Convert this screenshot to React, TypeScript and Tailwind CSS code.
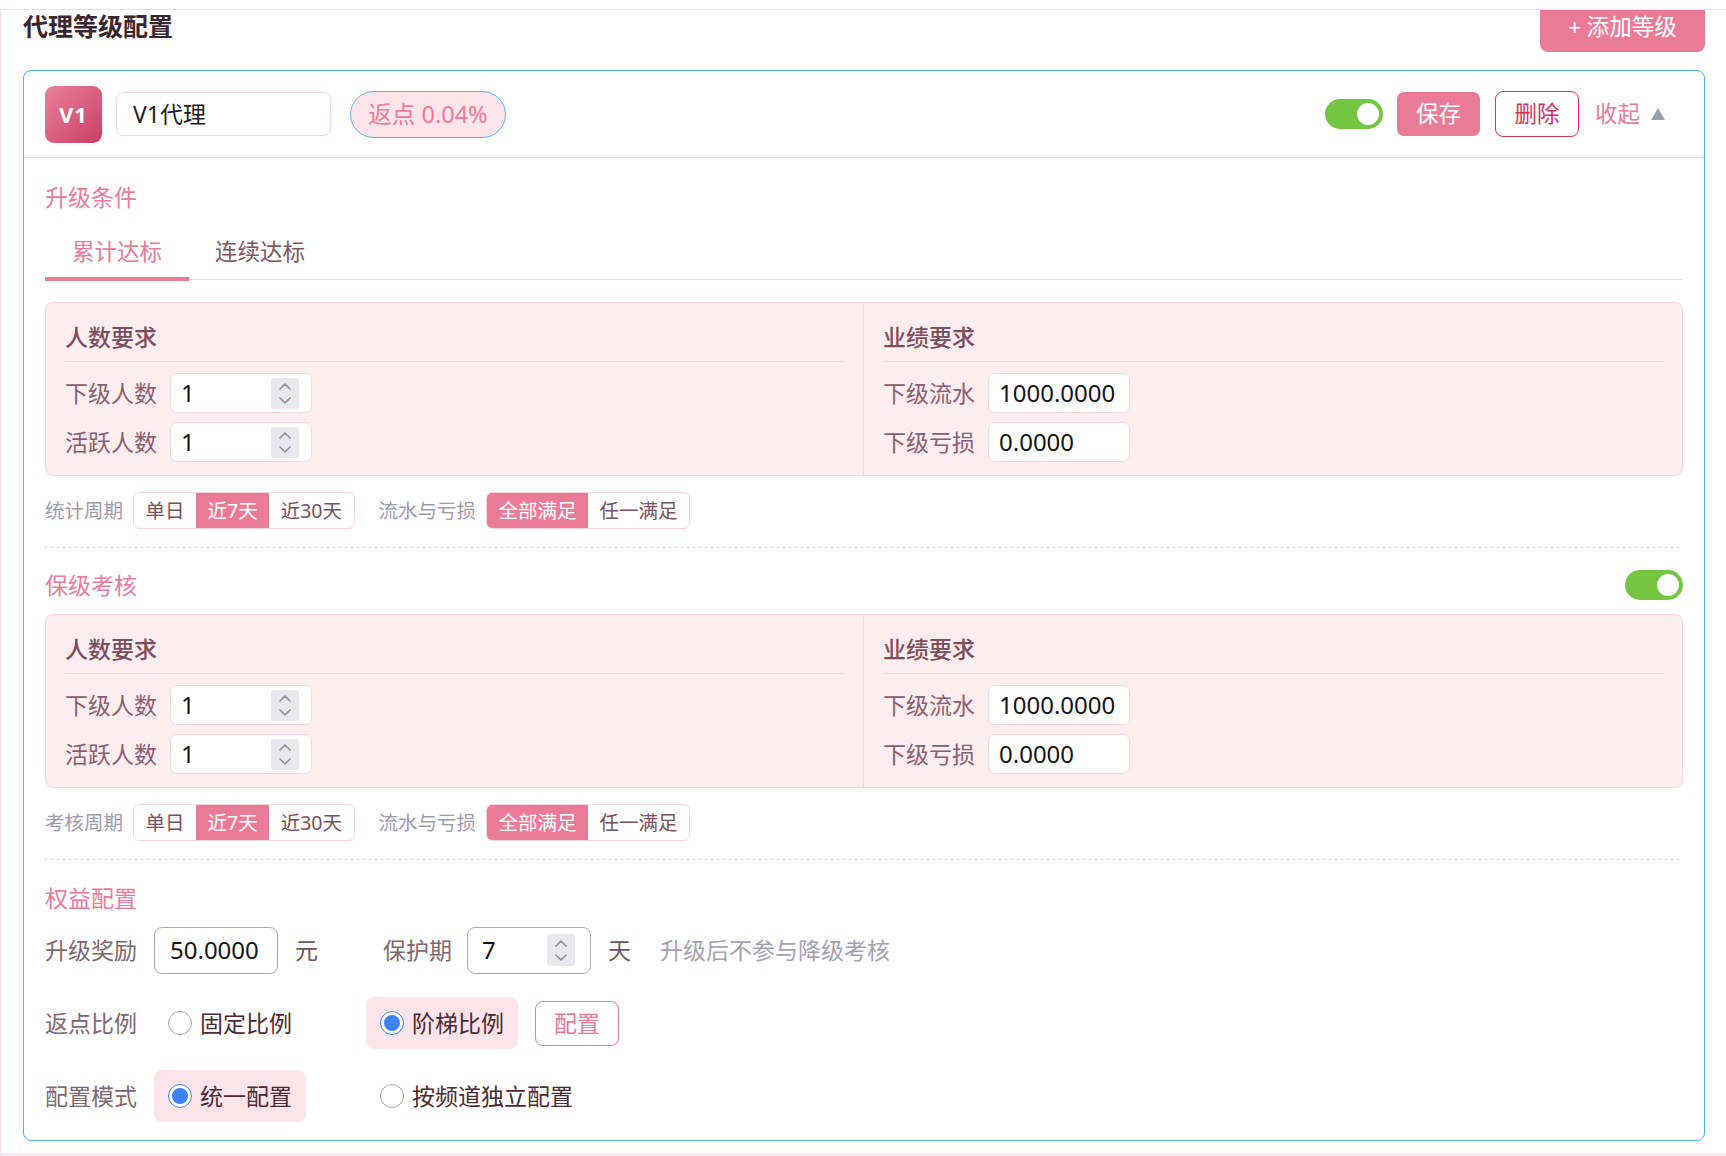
function Toggle() {
  return (
    <div className="flex h-[30px] w-[58px] items-center justify-end rounded-full bg-[#74c642] pr-[4px]">
      <div className="h-[22px] w-[22px] rounded-full bg-white" />
    </div>
  );
}

function Chevron({ up }: { up?: boolean }) {
  return (
    <svg width="12" height="7" viewBox="0 0 12 7" fill="none">
      <path
        d={up ? "M1 6 L6 1 L11 6" : "M1 1 L6 6 L11 1"}
        stroke="#8e8e99"
        strokeWidth="1.6"
        strokeLinecap="round"
        strokeLinejoin="round"
      />
    </svg>
  );
}

function Spinner({ tall }: { tall?: boolean }) {
  return (
    <div
      className={`flex w-[28px] flex-col items-center justify-center gap-[7px] rounded-[3px] bg-[#e8e8ed] ${
        tall ? "h-[32px]" : "h-[31px]"
      }`}
    >
      <Chevron up />
      <Chevron />
    </div>
  );
}

function Field({
  label,
  value,
  spin,
}: {
  label: string;
  value: string;
  spin?: boolean;
}) {
  return (
    <div className="flex h-[40px] items-center">
      <span className="w-[92px] text-[23px] leading-[30px] text-[#8a6070]">
        {label}
      </span>
      <div className="ml-[13px] flex h-[40px] w-[142px] items-center justify-between rounded-[7px] border border-[#f6d6de] bg-white pl-[10px] pr-[12px]">
        <span className="text-[24px] leading-[30px] text-[#141414]">
          {value}
        </span>
        {spin && <Spinner />}
      </div>
    </div>
  );
}

function Column({
  title,
  rows,
  spin,
  divider,
}: {
  title: string;
  rows: [string, string][];
  spin?: boolean;
  divider?: boolean;
}) {
  return (
    <div
      className={`pl-[19px] pr-[18px] pt-[19px] pb-[13px] ${
        divider ? "border-r border-[#f4d6de]" : ""
      }`}
    >
      <div className="border-b border-[#f4d3dc] pb-[9px] text-[23px] font-medium leading-[30px] text-[#7b4e5e]">
        {title}
      </div>
      <div className="mt-[11px] flex flex-col gap-[9px]">
        {rows.map(([l, v]) => (
          <Field key={l} label={l} value={v} spin={spin} />
        ))}
      </div>
    </div>
  );
}

function RequirementPanel() {
  return (
    <div className="grid grid-cols-2 rounded-[8px] border border-[#f6d6de] bg-[#fcedf0]">
      <Column
        title="人数要求"
        spin
        divider
        rows={[
          ["下级人数", "1"],
          ["活跃人数", "1"],
        ]}
      />
      <Column
        title="业绩要求"
        rows={[
          ["下级流水", "1000.0000"],
          ["下级亏损", "0.0000"],
        ]}
      />
    </div>
  );
}

function Segmented({ items, active }: { items: string[]; active: number }) {
  return (
    <div className="flex h-[37px] overflow-hidden rounded-[6px] border border-[#f6d6de] bg-white">
      {items.map((it, i) => (
        <div
          key={it}
          className={`flex items-center px-[11.5px] text-[19.5px] leading-[26px] ${
            i === active ? "bg-[#e97a98] text-white" : "text-[#735262]"
          }`}
        >
          {it}
        </div>
      ))}
    </div>
  );
}

function OptionsRow({ label }: { label: string }) {
  return (
    <div className="mt-[16px] flex items-center">
      <span className="text-[19.5px] leading-[26px] text-[#9d9cab]">{label}</span>
      <div className="ml-[10px]">
        <Segmented items={["单日", "近7天", "近30天"]} active={1} />
      </div>
      <span className="ml-[24px] text-[19.5px] leading-[26px] text-[#9d9cab]">
        流水与亏损
      </span>
      <div className="ml-[10px]">
        <Segmented items={["全部满足", "任一满足"]} active={0} />
      </div>
    </div>
  );
}

function DottedLine() {
  return (
    <div className="mt-[18px] h-px w-full bg-[linear-gradient(to_right,#f2c3d1_2px,transparent_2px)] bg-[length:6px_1px]" />
  );
}

function SectionTitle({ children }: { children: React.ReactNode }) {
  return (
    <div className="text-[23px] leading-[30px] text-[#ec7b9b]">{children}</div>
  );
}

function Radio({ label, checked }: { label: string; checked?: boolean }) {
  return (
    <div
      className={`flex h-[52px] items-center gap-[8px] rounded-[8px] px-[14px] ${
        checked ? "bg-[#fce4ea]" : ""
      }`}
    >
      {checked ? (
        <span className="flex h-[24px] w-[24px] items-center justify-center rounded-full border-[1.5px] border-[#3b82f6] bg-white">
          <span className="h-[16px] w-[16px] rounded-full bg-[#3b82f6]" />
        </span>
      ) : (
        <span className="h-[24px] w-[24px] rounded-full border-[1.5px] border-[#a8a8b4] bg-white" />
      )}
      <span className="text-[23px] leading-[30px] text-[#4a2a35]">{label}</span>
    </div>
  );
}

function RowLabel({ children }: { children: React.ReactNode }) {
  return (
    <span className="w-[93px] text-[23px] leading-[30px] text-[#7e6872]">
      {children}
    </span>
  );
}

export default function App() {
  return (
    <div className="relative h-[1156px] w-[1726px] overflow-hidden bg-white font-['Noto_Sans','Noto_Sans_CJK_SC',sans-serif]">
      <div className="mt-[9px] w-[1728px] border border-[#f5d9e1] px-[22px] pb-[13px]">
        {/* page header */}
        <div className="flex h-[60px] items-start justify-between">
          <h1 className="text-[25px] font-semibold leading-[32px] text-[#3a2630]">
            代理等级配置
          </h1>
          <button className="flex h-[42px] w-[165px] items-center justify-center rounded-b-[8px] bg-[#e97a98] pb-[8px] text-[22.5px] leading-[30px] text-white">
            + 添加等级
          </button>
        </div>

        {/* level card */}
        <div className="rounded-[8px] border border-[#4db5ea] bg-white">
          <div className="flex h-[87px] items-center border-b border-[#f5d5df] px-[21px]">
            <div className="flex h-[57px] w-[57px] items-center justify-center rounded-[9px] bg-gradient-to-br from-[#ea809e] to-[#c83c65] text-[22px] font-bold tracking-[1px] text-white">
              V1
            </div>
            <div className="ml-[14px] flex h-[44px] w-[215px] items-center rounded-[7px] border border-[#f6d6de] pl-[16px] text-[23px] leading-[30px] text-[#1d1d1f]">
              V1代理
            </div>
            <div className="ml-[19px] flex h-[47px] w-[156px] items-center justify-center rounded-full border border-[#5ab4e6] bg-[#fce4ea] text-[23.5px] leading-[30px] text-[#ec7a9a]">
              返点 0.04%
            </div>
            <div className="ml-auto flex items-center pr-[18px]">
              <Toggle />
              <button className="ml-[14px] flex h-[44px] w-[83px] items-center justify-center rounded-[7px] bg-[#e97a98] text-[22.5px] leading-[30px] text-white">
                保存
              </button>
              <button className="ml-[15px] flex h-[46px] w-[84px] items-center justify-center rounded-[8px] border border-[#d8385f] text-[22.5px] leading-[30px] text-[#d3325a]">
                删除
              </button>
              <button className="ml-[16px] flex items-center text-[22.5px] leading-[30px] text-[#ec7a9a]">
                收起
                <svg width="14" height="12" viewBox="0 0 14 12" className="ml-[11px]">
                  <path d="M7 0 L14 12 L0 12 Z" fill="#9aa0ad" />
                </svg>
              </button>
            </div>
          </div>

          <div className="px-[21px] pt-[24px] pb-[18px]">
            {/* 升级条件 */}
            <SectionTitle>升级条件</SectionTitle>
            <div className="mt-[12px] flex border-b border-[#f5d5df]">
              <div className="relative flex h-[55px] items-center px-[27px] text-[22.5px] leading-[30px] text-[#ec7b9b]">
                累计达标
                <span className="absolute -bottom-[2px] left-0 right-0 h-[4px] bg-[#e97a98]" />
              </div>
              <div className="flex h-[55px] items-center px-[26px] text-[22.5px] leading-[30px] text-[#7d5767]">
                连续达标
              </div>
            </div>
            <div className="mt-[22px]">
              <RequirementPanel />
            </div>
            <OptionsRow label="统计周期" />
            <DottedLine />

            {/* 保级考核 */}
            <div className="mt-[22px] flex h-[30px] items-center justify-between">
              <SectionTitle>保级考核</SectionTitle>
              <Toggle />
            </div>
            <div className="mt-[14px]">
              <RequirementPanel />
            </div>
            <OptionsRow label="考核周期" />
            <DottedLine />

            {/* 权益配置 */}
            <div className="mt-[23px]">
              <SectionTitle>权益配置</SectionTitle>
            </div>
            <div className="mt-[11px] flex flex-col gap-[21px]">
              <div className="flex h-[52px] items-center">
                <RowLabel>升级奖励</RowLabel>
                <div className="ml-[16px] flex h-[47px] w-[124px] items-center rounded-[8px] border border-[#a9a9b6] pl-[15px] text-[24px] leading-[30px] text-[#141414]">
                  50.0000
                </div>
                <span className="ml-[17px] text-[23px] leading-[30px] text-[#6b5560]">元</span>
                <span className="ml-[65px] text-[23px] leading-[30px] text-[#7e6872]">保护期</span>
                <div className="ml-[15px] flex h-[47px] w-[124px] items-center justify-between rounded-[8px] border border-[#a9a9b6] pl-[14px] pr-[15px] text-[24px] leading-[30px] text-[#141414]">
                  7
                  <Spinner tall />
                </div>
                <span className="ml-[17px] text-[23px] leading-[30px] text-[#6b5560]">天</span>
                <span className="ml-[29px] text-[23px] leading-[30px] text-[#a3a3b0]">
                  升级后不参与降级考核
                </span>
              </div>

              <div className="flex h-[52px] items-center">
                <RowLabel>返点比例</RowLabel>
                <div className="ml-[16px] flex items-center gap-[60px]">
                  <Radio label="固定比例" />
                  <div className="flex items-center">
                    <Radio label="阶梯比例" checked />
                    <button className="ml-[17px] flex h-[45px] w-[84px] items-center justify-center rounded-[8px] border border-[#e97a98] text-[23px] leading-[30px] text-[#e97a98]">
                      配置
                    </button>
                  </div>
                </div>
              </div>

              <div className="flex h-[52px] items-center">
                <RowLabel>配置模式</RowLabel>
                <div className="ml-[16px] flex items-center gap-[60px]">
                  <Radio label="统一配置" checked />
                  <Radio label="按频道独立配置" />
                </div>
              </div>
            </div>
          </div>
        </div>
      </div>
    </div>
  );
}
